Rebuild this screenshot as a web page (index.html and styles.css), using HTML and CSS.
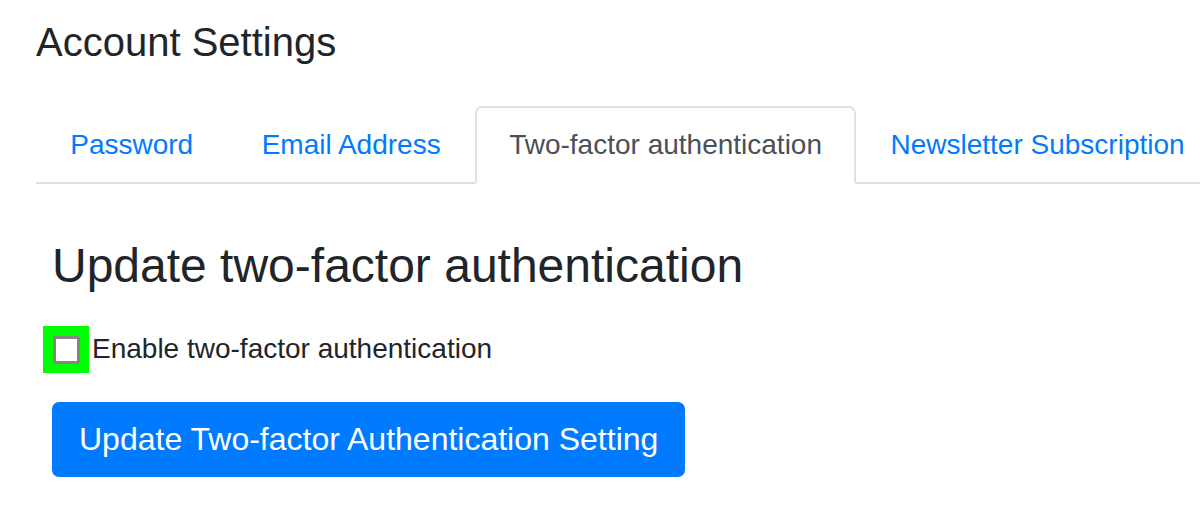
FILE: index.html
```html
<!DOCTYPE html>
<html lang="en">
<head>
<meta charset="utf-8">
<title>Account Settings</title>
<link rel="stylesheet" href="styles.css">
</head>
<body>
<div class="page">
  <h1 class="page-title">Account Settings</h1>
  <ul class="tabs">
    <li><a class="tab" href="#">Password</a></li>
    <li><a class="tab" href="#">Email Address</a></li>
    <li><a class="tab active" href="#">Two-factor authentication</a></li>
    <li><a class="tab" href="#">Newsletter Subscription</a></li>
  </ul>
  <div class="tab-content">
    <h2 class="section-title">Update two-factor authentication</h2>
    <div class="check-row">
      <span class="check-focus"><input type="checkbox" id="tfa" class="check"></span>
      <label for="tfa" class="check-label">Enable two-factor authentication</label>
    </div>
    <button class="btn" type="button">Update Two-factor Authentication Setting</button>
  </div>
</div>
</body>
</html>
```
FILE: styles.css
```css
html, body {
  margin: 0;
  padding: 0;
  background: #fff;
}
body {
  font-family: "Liberation Sans", Arial, sans-serif;
  color: #212529;
}
.page {
  padding: 18px 0 0 36px;
  overflow: hidden;
}
.page-title {
  margin: 0;
  font-size: 40px;
  font-weight: 400;
  line-height: 48px;
}
.tabs {
  list-style: none;
  margin: 40px 0 0 0;
  padding: 0;
  display: flex;
  flex-wrap: nowrap;
  border-bottom: 2px solid #dee2e6;
}
.tabs li {
  flex: none;
  margin-bottom: -2px;
}
.tab {
  display: block;
  padding: 16px 32.25px 16px;
  border: 2px solid transparent;
  border-top-left-radius: 7px;
  border-top-right-radius: 7px;
  font-size: 28px;
  line-height: 42px;
  color: #007bff;
  text-decoration: none;
  white-space: nowrap;
}
.tab.active {
  color: #495057;
  background: #fff;
  border-color: #dee2e6 #dee2e6 #fff;
}
.tab-content {
  padding: 53px 0 0 16px;
}
.section-title {
  margin: 0;
  font-size: 48px;
  font-weight: 400;
  line-height: 58px;
}
.check-row {
  display: flex;
  align-items: center;
  margin-top: 33px;
  height: 42px;
}
.check-focus {
  display: flex;
  flex: none;
  margin-left: -9px;
  margin-right: 3px;
  padding: 10px 9px 9px 10px;
  background: #00ff00;
}
.check {
  appearance: none;
  -webkit-appearance: none;
  display: block;
  margin: 0;
  width: 27px;
  height: 28px;
  box-sizing: border-box;
  border: 3px solid #858585;
  border-radius: 2px;
  background: #fff;
}
.check-label {
  font-size: 28px;
  line-height: 42px;
}
.btn {
  display: block;
  margin-top: 32px;
  padding: 13px 27px 14px;
  font-family: "Liberation Sans", Arial, sans-serif;
  font-size: 32px;
  line-height: 48px;
  color: #fff;
  background: #007bff;
  border: 0;
  border-radius: 7px;
  cursor: pointer;
}
```
